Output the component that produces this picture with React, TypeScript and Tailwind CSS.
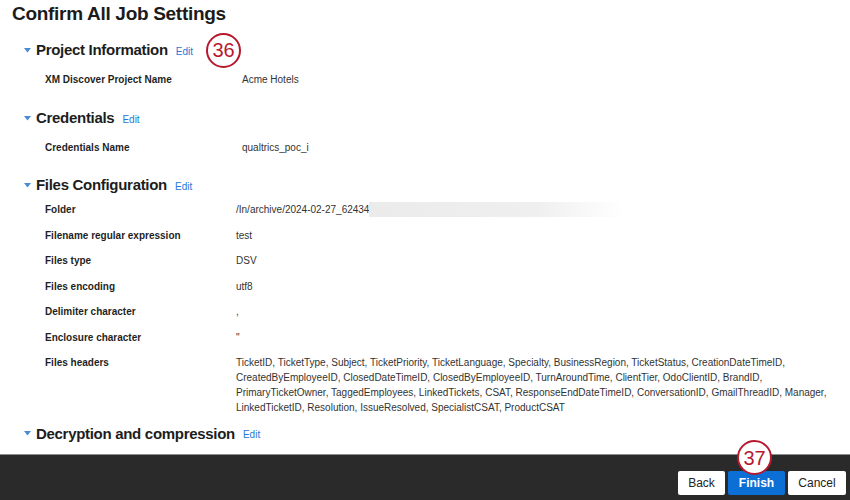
import React from "react";

const font = { fontFamily: '"Liberation Sans", Arial, Helvetica, sans-serif' };

function Caret() {
  return (
    <svg width="7" height="5" viewBox="0 0 7 5" className="shrink-0">
      <polygon points="0,0 7,0 3.5,4.5" fill="#4a8bd4" />
    </svg>
  );
}

function Badge({ n }: { n: string }) {
  return (
    <div className="w-[35px] h-[35px] rounded-full border-[2.5px] border-[#b7182e] bg-white flex items-center justify-center text-[20px] font-normal leading-none text-[#b7182e]">
      {n}
    </div>
  );
}

function SectionHeading({ title, badge }: { title: string; badge?: string }) {
  return (
    <div className="flex items-center h-[24px] pl-[24px]">
      <Caret />
      <h2 className="ml-[5px] text-[15px] font-bold tracking-[-0.3px] text-[#1d1d1d]">{title}</h2>
      <a className="ml-[8px] mt-[2px] text-[10px] text-[#2878d6] cursor-pointer">Edit</a>
      {badge && (
        <div className="ml-[13px]">
          <Badge n={badge} />
        </div>
      )}
    </div>
  );
}

function Row({
  label,
  labelWidth,
  children,
}: {
  label: string;
  labelWidth: string;
  children: React.ReactNode;
}) {
  return (
    <div className="flex items-start py-[5.25px] pl-[45px] leading-[15px]">
      <div className={`${labelWidth} shrink-0 text-[10px] font-bold text-[#1f1f1f]`}>{label}</div>
      <div className="text-[10px] text-[#333]">{children}</div>
    </div>
  );
}

const headerLines = [
  "TicketID, TicketType, Subject, TicketPriority, TicketLanguage, Specialty, BusinessRegion, TicketStatus, CreationDateTimeID,",
  "CreatedByEmployeeID, ClosedDateTimeID, ClosedByEmployeeID, TurnAroundTime, ClientTier, OdoClientID, BrandID,",
  "PrimaryTicketOwner, TaggedEmployees, LinkedTickets, CSAT, ResponseEndDateTimeID, ConversationID, GmailThreadID, Manager,",
  "LinkedTicketID, Resolution, IssueResolved, SpecialistCSAT, ProductCSAT",
];

export default function App() {
  return (
    <div className="w-[850px] h-[500px] flex flex-col bg-white overflow-hidden" style={font}>
      <div className="flex-1 overflow-hidden">
        <h1 className="pl-[12px] h-[28px] leading-[28px] text-[19px] font-bold tracking-[-0.3px] text-[#1b1b1b]">
          Confirm All Job Settings
        </h1>

        <div className="mt-[10px]">
          <SectionHeading title="Project Information" badge="36" />
          <div className="mt-[4.25px]">
            <Row label="XM Discover Project Name" labelWidth="w-[197px]">
              Acme Hotels
            </Row>
          </div>
        </div>

        <div className="mt-[14.25px]">
          <SectionHeading title="Credentials" />
          <div className="mt-[4.25px]">
            <Row label="Credentials Name" labelWidth="w-[197px]">
              qualtrics_poc_i
            </Row>
          </div>
        </div>

        <div className="mt-[13.25px]">
          <SectionHeading title="Files Configuration" />
          <div>
            <Row label="Folder" labelWidth="w-[191px]">
              <div className="flex items-center">
                <span>/In/archive/2024-02-27_62434</span>
                <span className="w-[255px] h-[15px] bg-[linear-gradient(to_right,#ebebeb_0%,#efefef_65%,rgba(255,255,255,0)_100%)]" />
              </div>
            </Row>
            <Row label="Filename regular expression" labelWidth="w-[191px]">
              test
            </Row>
            <Row label="Files type" labelWidth="w-[191px]">
              DSV
            </Row>
            <Row label="Files encoding" labelWidth="w-[191px]">
              utf8
            </Row>
            <Row label="Delimiter character" labelWidth="w-[191px]">
              ,
            </Row>
            <Row label="Enclosure character" labelWidth="w-[191px]">
              "
            </Row>
            <Row label="Files headers" labelWidth="w-[191px]">
              {headerLines.map((l) => (
                <div key={l} className="whitespace-nowrap">
                  {l}
                </div>
              ))}
            </Row>
          </div>
        </div>

        <div className="mt-[1.25px]">
          <SectionHeading title="Decryption and compression" />
        </div>
      </div>

      <div className="h-[46px] shrink-0 bg-[#2a2a2a] border-t border-[#8c8c8c] flex items-end justify-end gap-[3px] pr-[4px] pb-[5px]">
        <button className="h-[24px] w-[47px] rounded-[2px] bg-white text-[12px] text-[#222]">Back</button>
        <button className="relative h-[24px] w-[57px] rounded-[2px] bg-[#0b6fd6] text-[12px] font-bold text-white">
          Finish
          <div className="absolute left-[9px] top-[-31px]">
            <Badge n="37" />
          </div>
        </button>
        <button className="h-[24px] w-[58px] rounded-[2px] bg-white text-[12px] text-[#222]">Cancel</button>
      </div>
    </div>
  );
}
